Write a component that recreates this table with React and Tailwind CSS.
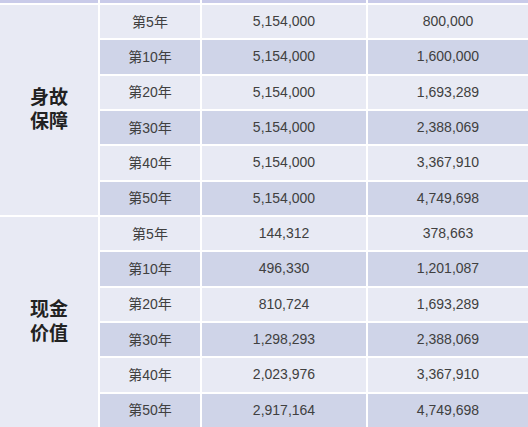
import React from 'react';

const groups = [
  {
    label: ['身故', '保障'],
    rows: [
      ['第5年', '5,154,000', '800,000'],
      ['第10年', '5,154,000', '1,600,000'],
      ['第20年', '5,154,000', '1,693,289'],
      ['第30年', '5,154,000', '2,388,069'],
      ['第40年', '5,154,000', '3,367,910'],
      ['第50年', '5,154,000', '4,749,698'],
    ],
  },
  {
    label: ['现金', '价值'],
    rows: [
      ['第5年', '144,312', '378,663'],
      ['第10年', '496,330', '1,201,087'],
      ['第20年', '810,724', '1,693,289'],
      ['第30年', '1,298,293', '2,388,069'],
      ['第40年', '2,023,976', '3,367,910'],
      ['第50年', '2,917,164', '4,749,698'],
    ],
  },
];

const App = () => {
  return (
    <div
      className="w-[528px] h-[427px] overflow-hidden bg-white grid grid-cols-[98px_100px_164px_1fr] grid-rows-[3px_repeat(12,1fr)] gap-[2px] text-[14px] text-[#404040]"
      style={{ fontFamily: '"Liberation Sans", "Noto Sans CJK SC", sans-serif' }}
    >
      {/* header strip, mostly cut off */}
      <div className="bg-[#c9cbe9]" />
      <div className="bg-[#c9cbe9]" />
      <div className="bg-[#c9cbe9]" />
      <div className="bg-[#c9cbe9]" />

      {groups.map((g, gi) => (
        <React.Fragment key={gi}>
          {g.rows.map((r, i) => {
            const shade = i % 2 === 0 ? 'bg-[#e8eaf4]' : 'bg-[#cfd4e8]';
            return (
              <React.Fragment key={i}>
                {i === 0 && (
                  <div
                    className="row-span-6 bg-[#e8eaf4] flex flex-col items-center justify-center gap-[1px] text-[19px] leading-[23px] font-bold text-[#222] pb-[4px]"
                    style={{ fontFamily: '"Noto Sans CJK SC", sans-serif' }}
                  >
                    <span>{g.label[0]}</span>
                    <span>{g.label[1]}</span>
                  </div>
                )}
                <div className={`${shade} flex items-center justify-center`}>
                  <span style={{ fontFamily: '"Noto Sans CJK SC", sans-serif' }} className="text-[14px]">
                    第<span style={{ fontFamily: '"Liberation Sans", sans-serif' }}>{r[0].slice(1, -1)}</span>年
                  </span>
                </div>
                <div className={`${shade} flex items-center justify-center`}>{r[1]}</div>
                <div className={`${shade} flex items-center justify-center`}>{r[2]}</div>
              </React.Fragment>
            );
          })}
        </React.Fragment>
      ))}
    </div>
  );
};

export default App;
